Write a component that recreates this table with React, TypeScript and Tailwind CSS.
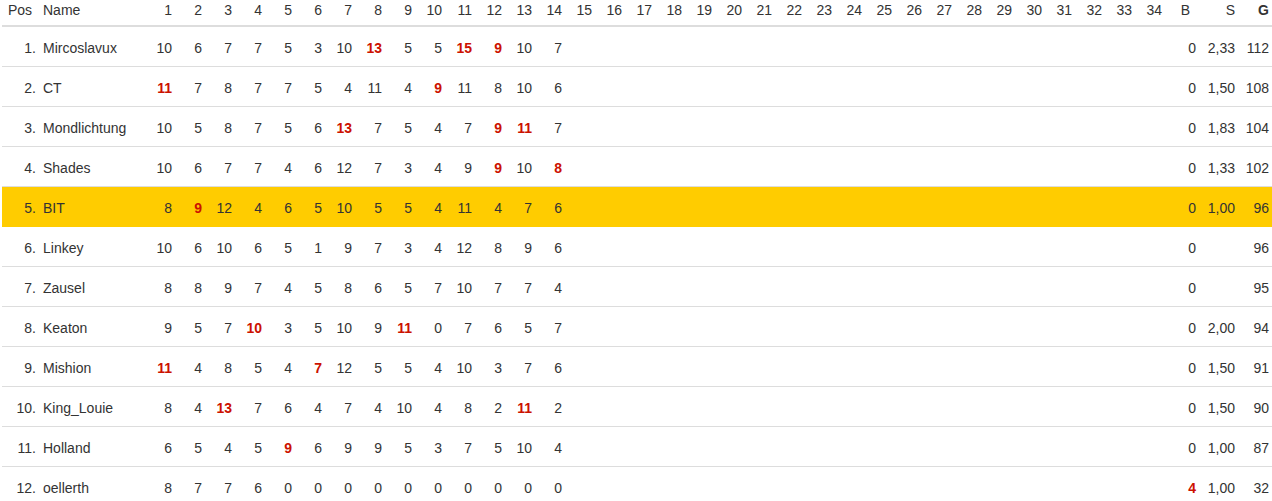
import React from 'react';

type Row = {
  pos: number;
  name: string;
  rounds: (number | string)[];
  b: string;
  s: string;
  g: number;
  highlight?: boolean;
};

// '*' after a value marks it red/bold
const rows: Row[] = [
  { pos: 1, name: 'Mircoslavux', rounds: [10, 6, 7, 7, 5, 3, 10, '13*', 5, 5, '15*', '9*', 10, 7], b: '0', s: '2,33', g: 112 },
  { pos: 2, name: 'CT', rounds: ['11*', 7, 8, 7, 7, 5, 4, 11, 4, '9*', 11, 8, 10, 6], b: '0', s: '1,50', g: 108 },
  { pos: 3, name: 'Mondlichtung', rounds: [10, 5, 8, 7, 5, 6, '13*', 7, 5, 4, 7, '9*', '11*', 7], b: '0', s: '1,83', g: 104 },
  { pos: 4, name: 'Shades', rounds: [10, 6, 7, 7, 4, 6, 12, 7, 3, 4, 9, '9*', 10, '8*'], b: '0', s: '1,33', g: 102 },
  { pos: 5, name: 'BIT', rounds: [8, '9*', 12, 4, 6, 5, 10, 5, 5, 4, 11, 4, 7, 6], b: '0', s: '1,00', g: 96, highlight: true },
  { pos: 6, name: 'Linkey', rounds: [10, 6, 10, 6, 5, 1, 9, 7, 3, 4, 12, 8, 9, 6], b: '0', s: '', g: 96 },
  { pos: 7, name: 'Zausel', rounds: [8, 8, 9, 7, 4, 5, 8, 6, 5, 7, 10, 7, 7, 4], b: '0', s: '', g: 95 },
  { pos: 8, name: 'Keaton', rounds: [9, 5, 7, '10*', 3, 5, 10, 9, '11*', 0, 7, 6, 5, 7], b: '0', s: '2,00', g: 94 },
  { pos: 9, name: 'Mishion', rounds: ['11*', 4, 8, 5, 4, '7*', 12, 5, 5, 4, 10, 3, 7, 6], b: '0', s: '1,50', g: 91 },
  { pos: 10, name: 'King_Louie', rounds: [8, 4, '13*', 7, 6, 4, 7, 4, 10, 4, 8, 2, '11*', 2], b: '0', s: '1,50', g: 90 },
  { pos: 11, name: 'Holland', rounds: [6, 5, 4, 5, '9*', 6, 9, 9, 5, 3, 7, 5, 10, 4], b: '0', s: '1,00', g: 87 },
  { pos: 12, name: 'oellerth', rounds: [8, 7, 7, 6, 0, 0, 0, 0, 0, 0, 0, 0, 0, 0], b: '4*', s: '1,00', g: 32 },
];

const cols = Array.from({ length: 34 }, (_, i) => i + 1);
const grid = 'grid grid-cols-[38px_106px_repeat(34,30px)_34px_39px_33px]';

function Val({ v }: { v: number | string | undefined }) {
  if (v === undefined) return <span />;
  const s = String(v);
  if (s.endsWith('*')) {
    return <span className="font-bold text-[#cc1100]">{s.slice(0, -1)}</span>;
  }
  return <span>{s}</span>;
}

export default function App() {
  return (
    <div
      className="bg-white text-[14px] leading-[16px] text-[#333] w-[1272px] h-[501px] overflow-hidden"
      style={{ fontFamily: '"Liberation Sans", Arial, sans-serif' }}
    >
      <div className="ml-[2px] w-[1270px]">
        <div className={`${grid} h-[27px] border-b-2 border-[#ddd] pt-[2px]`}>
          <div className="pl-[6px]">Pos</div>
          <div className="pl-[3px]">Name</div>
          {cols.map((c) => (
            <div key={c} className="text-right pr-[4px]">
              {c}
            </div>
          ))}
          <div className="text-right pr-[10px]">B</div>
          <div className="text-right pr-[4px]">S</div>
          <div className="text-right pr-[3px] font-bold">G</div>
        </div>
        {rows.map((r) => (
          <div
            key={r.pos}
            className={`${grid} h-[40px] pt-[2px] items-center border-b ${
              r.highlight ? 'bg-[#ffcc00] border-[#ffcc00]' : 'border-[#ddd]'
            }`}
          >
            <div className="text-right pr-[4px]">{r.pos}.</div>
            <div className="pl-[3px] whitespace-nowrap">{r.name}</div>
            {cols.map((c) => (
              <div key={c} className="text-right pr-[4px]">
                <Val v={r.rounds[c - 1]} />
              </div>
            ))}
            <div className="text-right pr-[4px]">
              <Val v={r.b} />
            </div>
            <div className="text-right pr-[4px]">{r.s}</div>
            <div className="text-right pr-[3px]">{r.g}</div>
          </div>
        ))}
      </div>
    </div>
  );
}
